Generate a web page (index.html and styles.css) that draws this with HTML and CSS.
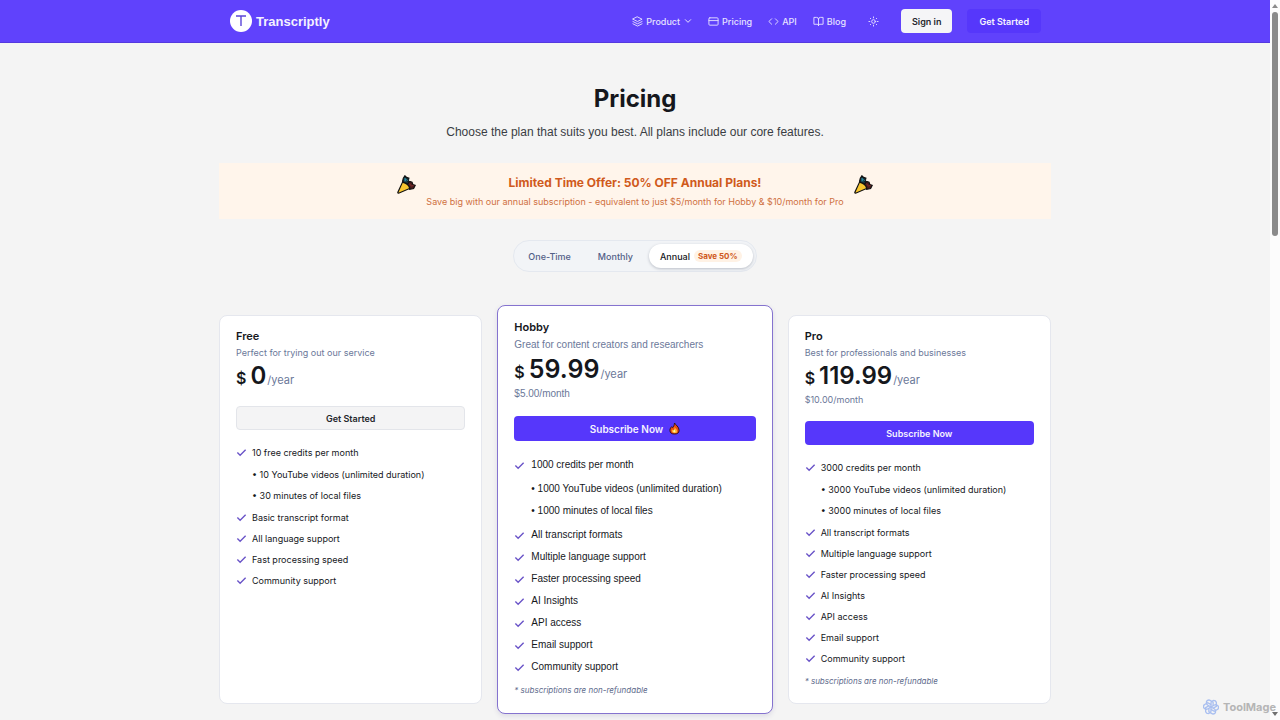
FILE: index.html
```html
<!DOCTYPE html>
<html lang="en">
<head>
  <meta charset="UTF-8">
  <meta name="viewport" content="width=device-width, initial-scale=1">
  <title>Pricing - Transcriptly</title>
  <link rel="stylesheet" href="styles.css">
</head>
<body>

  <!-- shared icons -->
  <svg class="sprite" aria-hidden="true">
    <symbol id="check" viewBox="0 0 24 24"><path d="M21 6 9 18l-6-6"/></symbol>
    <symbol id="party" viewBox="0 0 24 24">
      <path d="M7 8 8 4l2-3 2 2 3 1-1 4 2 2-4 3z" fill="#17323b" stroke="#111" stroke-width="1.5"/>
      <path d="m10 4 2 2-2 2zM12 8l2-2" fill="#2b8ba3" stroke="#2b8ba3"/>
      <path d="m13 12 3-4 3 1 1 3 3 1-2 4-5 1z" fill="#4b1d1d" stroke="#111" stroke-width="1.5"/>
      <path d="m16 11 2 3 3-1" fill="none" stroke="#8b3030"/>
      <path d="M7 9 1 22q0 1 1 1l14-6q-1-6-9-8z" fill="#f8c62f" stroke="#111" stroke-width="1.5"/>
    </symbol>
  </svg>

  <div class="page">
    <header class="topbar">
      <div class="topbar-inner">
        <a class="brand" href="#">
          <svg class="logo" viewBox="0 0 22 22"><circle cx="11" cy="11" r="11" fill="#fff"/><path d="M6 6h10M11 6v10" fill="none" stroke="#5b45d8" stroke-width="1.4"/></svg>
          Transcriptly
        </a>
        <nav class="nav">
          <a href="#">
            <svg class="icon" viewBox="0 0 24 24"><path d="m12 2 10 5-10 5L2 7zM2 12l10 5 10-5M2 17l10 5 10-5"/></svg>
            Product
            <svg class="icon chevron" viewBox="0 0 24 24"><path d="m4 8 8 8 8-8"/></svg>
          </a>
          <a href="#">
            <svg class="icon" viewBox="0 0 24 24"><rect x="2" y="4" width="20" height="16" rx="2"/><path d="M2 10h20"/></svg>
            Pricing
          </a>
          <a href="#">
            <svg class="icon" viewBox="0 0 24 24"><path d="m16 18 6-6-6-6M8 6l-6 6 6 6"/></svg>
            API
          </a>
          <a href="#">
            <svg class="icon" viewBox="0 0 24 24"><path d="M12 7v14M12 7a4 4 0 0 0-4-4H2v15h7a3 3 0 0 1 3 3 3 3 0 0 1 3-3h7V3h-6a4 4 0 0 0-4 4z"/></svg>
            Blog
          </a>
        </nav>
        <button class="theme" aria-label="Toggle theme">
          <svg class="icon" viewBox="0 0 24 24"><circle cx="12" cy="12" r="4"/><path d="M12 2v2M12 20v2M5 5l1 1M18 18l1 1M2 12h2M20 12h2M6 18l-1 1M19 5l-1 1"/></svg>
        </button>
        <button class="btn btn-light signin">Sign in</button>
        <button class="btn btn-primary start">Get Started</button>
      </div>
    </header>

    <main class="content">
      <h1>Pricing</h1>
      <p class="lead">Choose the plan that suits you best. All plans include our core features.</p>

      <section class="offer">
        <svg class="party"><use href="#party"/></svg>
        <div>
          <h2>Limited Time Offer: 50% OFF Annual Plans!</h2>
          <p>Save big with our annual subscription - equivalent to just $5/month for Hobby &amp; $10/month for Pro</p>
        </div>
        <svg class="party"><use href="#party"/></svg>
      </section>

      <div class="switch">
        <button>One-Time</button>
        <button>Monthly</button>
        <button class="active">Annual <span class="save">Save 50%</span></button>
      </div>

      <section class="plans">
        <article class="card">
          <h3>Free</h3>
          <p class="desc">Perfect for trying out our service</p>
          <p class="price"><span class="currency">$</span><span class="amount">0</span><span class="per">/year</span></p>
          <button class="btn btn-outline">Get Started</button>
          <ul class="features">
            <li><svg><use href="#check"/></svg>10 free credits per month</li>
            <li class="details">
              <ul>
                <li>• 10 YouTube videos (unlimited duration)</li>
                <li>• 30 minutes of local files</li>
              </ul>
            </li>
            <li><svg><use href="#check"/></svg>Basic transcript format</li>
            <li><svg><use href="#check"/></svg>All language support</li>
            <li><svg><use href="#check"/></svg>Fast processing speed</li>
            <li><svg><use href="#check"/></svg>Community support</li>
          </ul>
        </article>

        <article class="card featured">
          <h3>Hobby</h3>
          <p class="desc">Great for content creators and researchers</p>
          <p class="price"><span class="currency">$</span><span class="amount">59.99</span><span class="per">/year</span></p>
          <p class="monthly">$5.00/month</p>
          <button class="btn btn-primary">Subscribe Now
            <svg class="fire" viewBox="0 0 12 14"><path d="M6 1c1 2 5 4 5 8 0 3-2 4-5 4S1 12 1 9c0-2 1-3 2-4l1 1c1-1 2-3 2-5z" fill="#e94b16" stroke="#2a1010"/><path d="M6 5c1 2 3 3 3 5s-1 2-3 2-3-1-3-3l1-1 1 1c1-1 1-2 1-4z" fill="#ffb52b"/><path d="M6 8c1 1 1 2 1 3H5c-1-1 0-2 1-3z" fill="#fff1a8"/></svg>
          </button>
          <ul class="features">
            <li><svg><use href="#check"/></svg>1000 credits per month</li>
            <li class="details">
              <ul>
                <li>• 1000 YouTube videos (unlimited duration)</li>
                <li>• 1000 minutes of local files</li>
              </ul>
            </li>
            <li><svg><use href="#check"/></svg>All transcript formats</li>
            <li><svg><use href="#check"/></svg>Multiple language support</li>
            <li><svg><use href="#check"/></svg>Faster processing speed</li>
            <li><svg><use href="#check"/></svg>AI Insights</li>
            <li><svg><use href="#check"/></svg>API access</li>
            <li><svg><use href="#check"/></svg>Email support</li>
            <li><svg><use href="#check"/></svg>Community support</li>
          </ul>
          <p class="note">* subscriptions are non-refundable</p>
        </article>

        <article class="card">
          <h3>Pro</h3>
          <p class="desc">Best for professionals and businesses</p>
          <p class="price"><span class="currency">$</span><span class="amount">119.99</span><span class="per">/year</span></p>
          <p class="monthly">$10.00/month</p>
          <button class="btn btn-primary">Subscribe Now</button>
          <ul class="features">
            <li><svg><use href="#check"/></svg>3000 credits per month</li>
            <li class="details">
              <ul>
                <li>• 3000 YouTube videos (unlimited duration)</li>
                <li>• 3000 minutes of local files</li>
              </ul>
            </li>
            <li><svg><use href="#check"/></svg>All transcript formats</li>
            <li><svg><use href="#check"/></svg>Multiple language support</li>
            <li><svg><use href="#check"/></svg>Faster processing speed</li>
            <li><svg><use href="#check"/></svg>AI Insights</li>
            <li><svg><use href="#check"/></svg>API access</li>
            <li><svg><use href="#check"/></svg>Email support</li>
            <li><svg><use href="#check"/></svg>Community support</li>
          </ul>
          <p class="note">* subscriptions are non-refundable</p>
        </article>
      </section>
    </main>
  </div>

  <div class="scrollbar" aria-hidden="true">
    <span class="arrow up"></span>
    <span class="thumb"></span>
    <span class="arrow down"></span>
  </div>

  <div class="watermark">
    <svg viewBox="0 0 24 24"><g fill="none" stroke="#a9bff0" stroke-width="2"><path id="petal" d="M12 12V6q0-2 2-3l2-1q3 0 4 3v6l-5 3"/><use href="#petal" transform="rotate(60 12 12)"/><use href="#petal" transform="rotate(120 12 12)"/><use href="#petal" transform="rotate(180 12 12)"/><use href="#petal" transform="rotate(240 12 12)"/><use href="#petal" transform="rotate(300 12 12)"/></g></svg>
    ToolMage
  </div>

</body>
</html>
```
FILE: styles.css
```css
* {
  box-sizing: border-box;
  margin: 0;
  padding: 0;
}

body {
  display: flex;
  height: 100vh;
  overflow: hidden;
  font-family: Inter, "Liberation Sans", sans-serif;
  font-size: 9px;
  color: #15171c;
  background: #f4f4f4;
}

button {
  font: inherit;
  border: none;
  cursor: pointer;
}

a {
  color: inherit;
  text-decoration: none;
}

ul {
  list-style: none;
}

.sprite {
  position: absolute;
  width: 0;
  height: 0;
}

.page {
  flex: 1;
}

/* top bar */
.topbar {
  background: #6042fc;
  border-bottom: 1px solid #5439df;
  color: #e6e1ff;
}

.topbar-inner {
  display: flex;
  align-items: center;
  max-width: 832px;
  height: 42px;
  margin: 0 auto;
  padding: 0 10px 0 11px;
}

.brand {
  display: flex;
  align-items: center;
  gap: 4px;
  margin-right: auto;
  font-family: "Liberation Sans", Arial, sans-serif;
  font-size: 13px;
  font-weight: 700;
  color: #f4f1ff;
}

.logo {
  width: 22px;
  height: 22px;
}

.nav {
  display: flex;
  gap: 16px;
  font-weight: 500;
}

.nav a {
  display: flex;
  align-items: center;
  gap: 3px;
}

.icon {
  width: 11px;
  height: 11px;
  fill: none;
  stroke: currentColor;
  stroke-width: 2;
  stroke-linecap: round;
  stroke-linejoin: round;
}

.chevron {
  width: 8px;
  height: 8px;
  margin-left: 1px;
  stroke-width: 3;
}

.theme {
  display: flex;
  margin: 0 22px;
  color: inherit;
  background: none;
}

/* buttons */
.btn {
  display: flex;
  align-items: center;
  justify-content: center;
  gap: 6px;
  height: 24px;
  padding: 0 11px;
  border-radius: 4px;
  font-weight: 600;
}

.btn-light {
  color: #25272d;
  background: #f5f5f7;
}

.btn-primary {
  color: #f5f2ff;
  background: #5637fb;
}

.btn-outline {
  color: #25272d;
  background: #f4f4f5;
  border: 1px solid #e3e5ea;
}

.signin {
  margin-right: 15px;
}

.start {
  padding: 0 12px;
}

/* page head */
.content {
  max-width: 832px;
  margin: 0 auto;
  padding-top: 42px;
  text-align: center;
}

h1 {
  font-size: 24px;
  line-height: 28px;
}

.lead {
  margin-top: 9px;
  font-family: "Liberation Sans", Arial, sans-serif;
  font-size: 12px;
  line-height: 20px;
  color: #3a3d43;
}

.offer {
  display: flex;
  justify-content: center;
  gap: 10px;
  margin-top: 21px;
  padding: 11px 0;
  background: #fff5eb;
  color: #cf7142;
}

.offer h2 {
  font-size: 12px;
  line-height: 18px;
  color: #d05a1c;
}

.offer p {
  margin-top: 3px;
  line-height: 13px;
}

.party {
  width: 19px;
  height: 19px;
  margin-top: 1px;
}

.switch {
  display: inline-flex;
  height: 32px;
  margin-top: 21px;
  padding: 3px;
  border: 1px solid #e4e8ef;
  border-radius: 16px;
  background: #f2f4f7;
}

.switch button {
  display: flex;
  align-items: center;
  gap: 4px;
  padding: 0 11px;
  margin-right: 5px;
  border-radius: 12px;
  font-weight: 500;
  color: #536087;
  background: none;
}

.switch .active {
  margin-right: 0;
  color: #15171c;
  background: #fff;
  box-shadow: 0 1px 3px rgba(20, 30, 60, 0.25);
}

.save {
  padding: 1px 4px;
  border-radius: 6px;
  font-size: 8px;
  font-weight: 700;
  color: #cf591d;
  background: #fff2e5;
}

/* plans */
.plans {
  display: grid;
  grid-template-columns: repeat(3, 1fr);
  gap: 21px;
  margin-top: 43px;
  text-align: left;
}

.card {
  padding: 15px 16px;
  border: 1px solid #e5e7ee;
  border-radius: 8px;
  background: #fff;
}

.card h3 {
  font-size: 11px;
  font-weight: 600;
  line-height: 11px;
}

.desc {
  margin-top: 4px;
  line-height: 14px;
  color: #6b7899;
}

.price {
  display: flex;
  align-items: baseline;
  line-height: 1;
}

.currency {
  margin-right: 4px;
  font-size: 16px;
  font-weight: 600;
}

.amount {
  font-size: 24px;
  font-weight: 600;
  line-height: 32px;
}

.per {
  margin-left: 1px;
  font-size: 11px;
  color: #6b7899;
}

.monthly {
  line-height: 15px;
  color: #6b7899;
}

.card .btn {
  width: 100%;
  margin-top: 14px;
}

.features {
  margin-top: 12px;
}

.features li {
  display: flex;
  align-items: center;
  gap: 5px;
  line-height: 21px;
}

.features svg {
  width: 11px;
  height: 11px;
  fill: none;
  stroke: #6a54c8;
  stroke-width: 3;
}

.features .details {
  padding: 1px 0 1px 16px;
}

.note {
  margin-top: 5px;
  font-size: 8px;
  font-style: italic;
  line-height: 14px;
  color: #5e6b8c;
}

/* the highlighted plan grows past its grid cell */
.featured {
  margin: -10px -6px;
  padding: 16px;
  border-color: #8573cf;
  font-size: 10px;
  box-shadow: 0 2px 5px rgba(60, 50, 120, 0.12);
}

.featured .desc,
.featured .monthly,
.featured .features {
  font-family: "Liberation Sans", Arial, sans-serif;
}

.featured .desc {
  margin-top: 5px;
}

.featured .amount {
  font-size: 25px;
  line-height: 35px;
}

.featured .monthly {
  line-height: 14px;
}

.featured .btn {
  height: 25px;
  margin-top: 15px;
}

.featured .features {
  margin-top: 13px;
}

.featured .features li {
  gap: 6px;
  line-height: 22px;
}

.featured .features .details {
  padding: 2px 0 2px 17px;
}

.fire {
  width: 11px;
  height: 13px;
}

/* scroll bar */
.scrollbar {
  display: flex;
  flex-direction: column;
  align-items: center;
  gap: 4px;
  width: 10px;
  padding: 4px 0;
  background: #fcfcfc;
}

.arrow {
  border: 3px solid transparent;
}

.up {
  border-top: none;
  border-bottom: 4px solid #8a8a8a;
}

.down {
  margin-top: auto;
  border-bottom: none;
  border-top: 4px solid #707070;
}

.thumb {
  width: 6px;
  height: 224px;
  border-radius: 3px;
  background: #8b8b8b;
}

.watermark {
  position: absolute;
  right: 4px;
  bottom: 5px;
  display: flex;
  align-items: center;
  gap: 4px;
  font-size: 11px;
  font-weight: 700;
  color: #b5b5b5;
}

.watermark svg {
  width: 16px;
  height: 16px;
}
```
